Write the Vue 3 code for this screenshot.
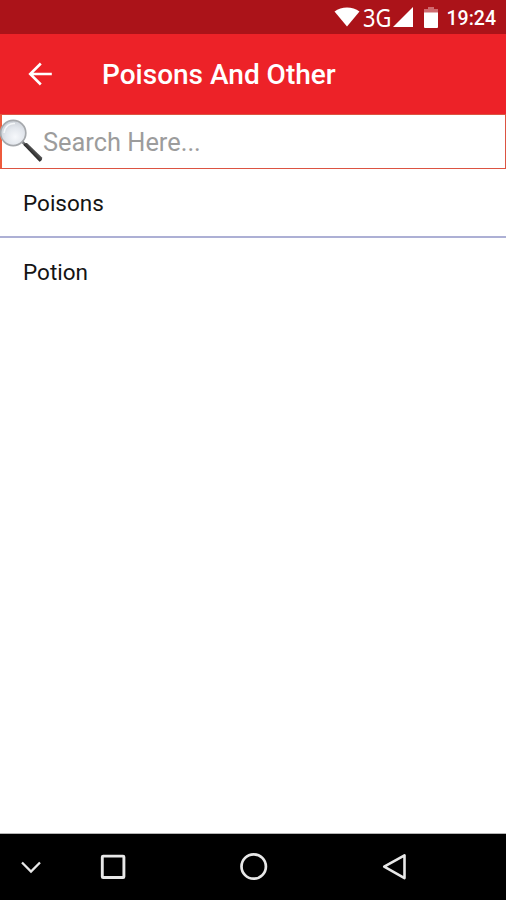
<script setup>
import { computed, ref } from 'vue'

const title = 'Poisons And Other'
const searchTerm = ref('')

const categories = [
  { id: 1, name: 'Poisons' },
  { id: 2, name: 'Potion' }
]

const filteredCategories = computed(() => {
  const query = searchTerm.value.trim().toLowerCase()
  if (!query) return categories

  return categories.filter((category) => category.name.toLowerCase().includes(query))
})
</script>

<template>
  <div class="screen">
    <div class="status-bar">
      <svg class="icon-wifi" width="26" height="20" viewBox="0 0 26 20">
        <path d="M0.500 4.500C7.500-1 18.500-1 25.500 4.500L13 19.500Z" fill="#fff" />
      </svg>
      <span class="network">3G</span>
      <svg class="icon-signal" width="20" height="20" viewBox="0 0 20 20">
        <path d="M20 0V20H0Z" fill="#fff" />
      </svg>
      <svg class="icon-battery" width="14" height="21" viewBox="0 0 14 21">
        <path d="M4 0H10V2H14V6H0V2H4Z" fill="#cf6a6f" />
        <path d="M0 5.500H14V20Q14 21 13 21H1Q0 21 0 20Z" fill="#fff" />
      </svg>
      <span class="clock">19:24</span>
    </div>

    <header class="app-bar">
      <button class="btn-back" aria-label="Back">
        <svg width="24" height="24" viewBox="0 0 24 24" fill="none" stroke="#fff" stroke-width="2.600">
          <path d="M23.800 12H2M12.800 1.500L2.200 12L12.800 22.500" />
        </svg>
      </button>
      <h1>{{ title }}</h1>
    </header>

    <label class="search-box">
      <svg class="icon-search" width="43" height="46" viewBox="0 0 43 46">
        <defs>
          <radialGradient id="lens" cx="0.58" cy="0.65" r="0.65">
            <stop offset="0" stop-color="#f6f8fb" />
            <stop offset="0.550" stop-color="#e3e7ed" />
            <stop offset="1" stop-color="#cbd0d7" />
          </radialGradient>
          <linearGradient id="handle" x1="0" y1="1" x2="1" y2="0">
            <stop offset="0.350" stop-color="#111" />
            <stop offset="0.600" stop-color="#555" />
          </linearGradient>
        </defs>
        <path d="M22 23.500L26.500 28" stroke="#77797c" stroke-width="2.500" />
        <path d="M23.500 27Q24 24.500 27 25L42 39.500Q42.800 42.500 39.500 43.800Z" fill="url(#handle)" />
        <circle cx="13.200" cy="15" r="12.600" fill="url(#lens)" stroke="#a6a9ad" stroke-width="1.700" />
        <path d="M4 15C5 8 10 5 15 5.500" fill="none" stroke="#f5f7f9" stroke-width="1.500" />
      </svg>
      <input v-model="searchTerm" type="text" placeholder="Search Here..." />
    </label>

    <ul class="category-list">
      <li v-for="category in filteredCategories" :key="category.id">{{ category.name }}</li>
    </ul>

    <nav class="nav-bar">
      <svg width="62" height="66" viewBox="0 0 62 66">
        <path d="M22 28.500L31 37.500L40 28.500" stroke-width="2.300" />
      </svg>
      <svg width="102" height="66" viewBox="0 0 102 66">
        <rect x="40.300" y="22.100" width="21.600" height="21.400" rx="0.800" stroke-width="2.900" />
      </svg>
      <svg width="180" height="66" viewBox="0 0 180 66">
        <circle cx="89.700" cy="32.500" r="12.200" stroke-width="2.700" />
      </svg>
      <svg width="100" height="66" viewBox="0 0 100 66">
        <path d="M60.500 21.300V44.100L40.200 32.700Z" stroke-width="2.600" stroke-linejoin="round" />
      </svg>
    </nav>
  </div>
</template>

<style>
body {
  margin: 0;
  background: #fff;
}
</style>

<style scoped>
.screen {
  display: flex;
  flex-direction: column;
  width: 100%;
  height: 100vh;
  overflow: hidden;
  background: #fff;
  font-family: Roboto, "Liberation Sans", sans-serif;
}

.status-bar {
  display: flex;
  flex: none;
  align-items: center;
  justify-content: flex-end;
  box-sizing: border-box;
  height: 34px;
  padding-right: 10px;
  background: #ab1319;
  color: #fff;
}

.network {
  width: 30px;
  margin-left: 3px;
  font-family: "Noto Sans", sans-serif;
  font-size: 26px;
  line-height: 34px;
  transform: scaleX(0.84);
  transform-origin: left center;
}

.icon-battery {
  margin-left: 11px;
}

.clock {
  margin-left: 8.500px;
  padding-top: 3px;
  font-size: 19.500px;
  font-weight: 500;
  line-height: 34px;
}

.app-bar {
  display: flex;
  flex: none;
  align-items: center;
  height: 79.500px;
  background: #ed2228;
}

.btn-back {
  display: flex;
  margin: 0 0 0 28px;
  padding: 0;
  border: none;
  background: none;
  cursor: pointer;
}

h1 {
  margin: 2px 0 0 50px;
  color: #fff;
  font-size: 28px;
  font-weight: 500;
  line-height: 36px;
}

.search-box {
  display: flex;
  flex: none;
  align-items: center;
  box-sizing: border-box;
  height: 55.500px;
  border: 1px solid #dc5442;
  border-left: 2px solid #ee5a3c;
  background: #fff;
}

.icon-search {
  flex: none;
  margin-left: -2px;
}

.search-box input {
  flex: 1;
  min-width: 0;
  padding: 2px 0 0;
  border: none;
  outline: none;
  background: none;
  color: #222;
  font: 25.400px Roboto, "Liberation Sans", sans-serif;
}

.search-box input::placeholder {
  color: #9c9c9c;
  opacity: 1;
}

.category-list {
  flex: 1;
  margin: 0;
  padding: 0;
  list-style: none;
}

.category-list li {
  box-sizing: border-box;
  height: 69px;
  padding-left: 23px;
  color: #141414;
  font-size: 22.500px;
  line-height: 69px;
}

.category-list li:not(:last-child) {
  border-bottom: 2px solid #adb0d5;
}

.nav-bar {
  display: flex;
  flex: none;
  height: 66px;
  border-top: 1px solid #b5b5b5;
  background: #000;
}

.nav-bar svg {
  fill: none;
  stroke: #e8e8e8;
}
</style>
